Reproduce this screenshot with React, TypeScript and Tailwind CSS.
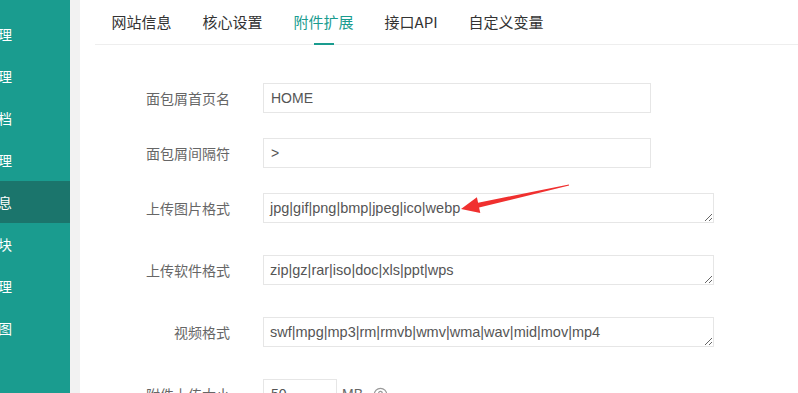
import React from 'react';
import { CircleHelp } from 'lucide-react';

const menu = ['栏目管理', '内容管理', '单页文档', '模型管理', '站点信息', '定制区块', '链接管理', '网站地图'];
const tabs = ['网站信息', '核心设置', '附件扩展', '接口API', '自定义变量'];

const cjk = { fontFamily: '"Noto Sans CJK SC", "Noto Sans", sans-serif' };
const latin = { fontFamily: '"Liberation Sans", "Noto Sans CJK SC", sans-serif' };

function Label({ text }: { text: string }) {
  return (
    <div className="w-[150px] shrink-0 text-right text-[14px] text-[#666] leading-[28px]" style={cjk}>
      {text}
    </div>
  );
}

function App() {
  return (
    <div className="min-h-screen flex bg-white">
      {/* Sidebar */}
      <div className="w-[70px] shrink-0 bg-[#1a9c8f] overflow-hidden pt-[13px]">
        {menu.map((m, i) => (
          <div
            key={m}
            className={`h-[42px] flex items-center text-white text-[14px] whitespace-nowrap ${i === 4 ? 'bg-[#1b756c]' : ''}`}
            style={cjk}
          >
            <span className="-ml-[44px]">{m}</span>
          </div>
        ))}
      </div>
      <div className="w-[10px] shrink-0 bg-[#f2f2f2]" />

      {/* Main */}
      <div className="flex-1 relative">
        <div className="ml-[15px] h-[45px] border-b border-[#eeeeee] flex items-center">
          {tabs.map((t, i) => (
            <div
              key={t}
              className={`relative h-full px-[15.5px] flex items-center text-[15px] ${i === 2 ? 'text-[#1a9c8f]' : 'text-[#333]'} ${i === 0 ? 'ml-[1px]' : ''}`}
              style={cjk}
            >
              {t}
              {i === 2 && (
                <span className="absolute left-1/2 -translate-x-1/2 bottom-[-1px] w-[20px] h-[2px] bg-[#1a9c8f]" />
              )}
            </div>
          ))}
        </div>

        <div className="pt-[38px]">
          <div className="flex items-center mb-[25px]">
            <Label text="面包屑首页名" />
            <input
              defaultValue="HOME"
              className="ml-[33px] w-[388px] h-[30px] border border-[#e6e6e6] px-[7px] text-[14px] text-[#555] outline-none"
              style={latin}
            />
          </div>
          <div className="flex items-center mb-[25px]">
            <Label text="面包屑间隔符" />
            <input
              defaultValue=">"
              className="ml-[33px] w-[388px] h-[30px] border border-[#e6e6e6] px-[7px] text-[14px] text-[#555] outline-none"
              style={latin}
            />
          </div>
          {[
            ['上传图片格式', 'jpg|gif|png|bmp|jpeg|ico|webp'],
            ['上传软件格式', 'zip|gz|rar|iso|doc|xls|ppt|wps'],
            ['视频格式', 'swf|mpg|mp3|rm|rmvb|wmv|wma|wav|mid|mov|mp4'],
          ].map(([l, v]) => (
            <div key={l} className="flex items-center mb-[32px]">
              <Label text={l} />
              <textarea
                defaultValue={v}
                className="ml-[33px] w-[451px] h-[30px] border border-[#e6e6e6] px-[6px] py-[4px] leading-[20px] text-[14.5px] text-[#555] outline-none overflow-hidden block"
                style={latin}
              />
            </div>
          ))}
          <div className="flex items-center">
            <Label text="附件上传大小" />
            <input
              defaultValue="50"
              className="ml-[33px] w-[74px] h-[30px] border border-[#e6e6e6] px-[7px] text-[14px] text-[#555] outline-none"
              style={latin}
            />
            <span className="ml-[5px] text-[14px] text-[#666]" style={latin}>MB</span>
            <CircleHelp className="ml-[10px] w-[15px] h-[15px] text-[#999]" />
          </div>
        </div>

        {/* red annotation arrow */}
        <svg className="absolute left-[-80px] top-0 pointer-events-none" width="798" height="393">
          <polygon
            points="461,209 476.9,197.3 478.1,202.7 568.9,184.5 569.1,185.5 479.1,207.5 480.3,212.9"
            fill="#f0302f"
          />
        </svg>
      </div>
    </div>
  );
}

export default App;
